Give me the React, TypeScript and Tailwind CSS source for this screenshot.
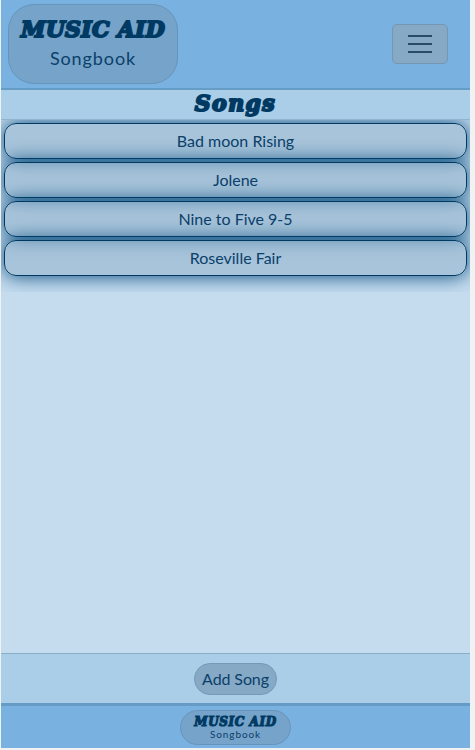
const songs = ["Bad moon Rising", "Jolene", "Nine to Five 9-5", "Roseville Fair"];

const display = "font-['DejaVu_Serif',serif] font-bold italic whitespace-nowrap text-[#003a63]";

export default function App() {
  return (
    <div className="h-[750px] w-[475px] overflow-hidden bg-[#f1f2f4] pl-px font-['Lato',sans-serif] text-[#0b4069] antialiased">
      <div className="flex h-[748px] w-[469px] flex-col bg-[#c5dcef]">
        <header className="flex h-[90px] shrink-0 items-start justify-between border-b-2 border-[#659dc7] bg-[#79b2e0] pt-1 pr-[22px] pl-[7px]">
          <a className="flex h-20 w-[170px] flex-col items-center rounded-[26px] border border-[#6794bb] bg-[#76a3c9]">
            <span className={`${display} mt-[8px] text-[22px] leading-[32px] tracking-[0.3px] [-webkit-text-stroke:2px_#003a63]`}>MUSIC AID</span>
            <span className="mt-[1px] text-[18px] leading-6 tracking-[0.9px]">Songbook</span>
          </a>
          <button aria-label="Menu" className="mt-5 flex h-10 w-14 flex-col items-center justify-center gap-[6px] rounded-[5px] border border-[#7396b3] bg-[#86a9c6]">
            <span className="h-[2px] w-6 bg-[#294b66]" />
            <span className="h-[2px] w-6 bg-[#294b66]" />
            <span className="h-[2px] w-6 bg-[#294b66]" />
          </button>
        </header>
        <div className="flex h-[30px] shrink-0 items-center justify-center border-b border-[#8fb5d0] bg-[#aacde8]">
          <h1 className={`${display} pb-[4px] text-[22px] leading-[26px] tracking-[1.4px] [-webkit-text-stroke:2px_#003a63]`}>Songs</h1>
        </div>
        <main className="h-[172px] shrink-0 overflow-hidden px-[3px] pt-[3px]">
          <div className="flex flex-col gap-[3px]">
            {songs.map((song) => (
              <button key={song} className="relative h-9 w-full rounded-[12px] border border-[#003a63] bg-[#8aabc680] text-base leading-6 shadow-[0_0_20px_#004678]">
                {song}
              </button>
            ))}
          </div>
        </main>
        <div className="mt-auto flex h-[50px] shrink-0 items-center justify-center border-t border-[#88aec9] bg-[#aacde8]">
          <button className="h-8 w-[83px] rounded-full border border-[#7799b8] bg-[#86a9c6] text-base leading-6 tracking-[-0.1px] whitespace-nowrap">Add Song</button>
        </div>
        <footer className="flex h-[45px] shrink-0 items-start justify-center border-t-[3px] border-[#659bc5] bg-[#79b2e0] pt-1">
          <div className="flex h-[35px] w-[111px] flex-col items-center rounded-full border border-[#6794bb] bg-[#76a3c9]">
            <span className={`${display} mt-[4px] text-[12px] leading-[14px] tracking-[0.6px] [-webkit-text-stroke:1.1px_#003a63]`}>MUSIC AID</span>
            <span className="-mt-px text-[10px] leading-[12px] tracking-[0.9px]">Songbook</span>
          </div>
        </footer>
      </div>
    </div>
  );
}
